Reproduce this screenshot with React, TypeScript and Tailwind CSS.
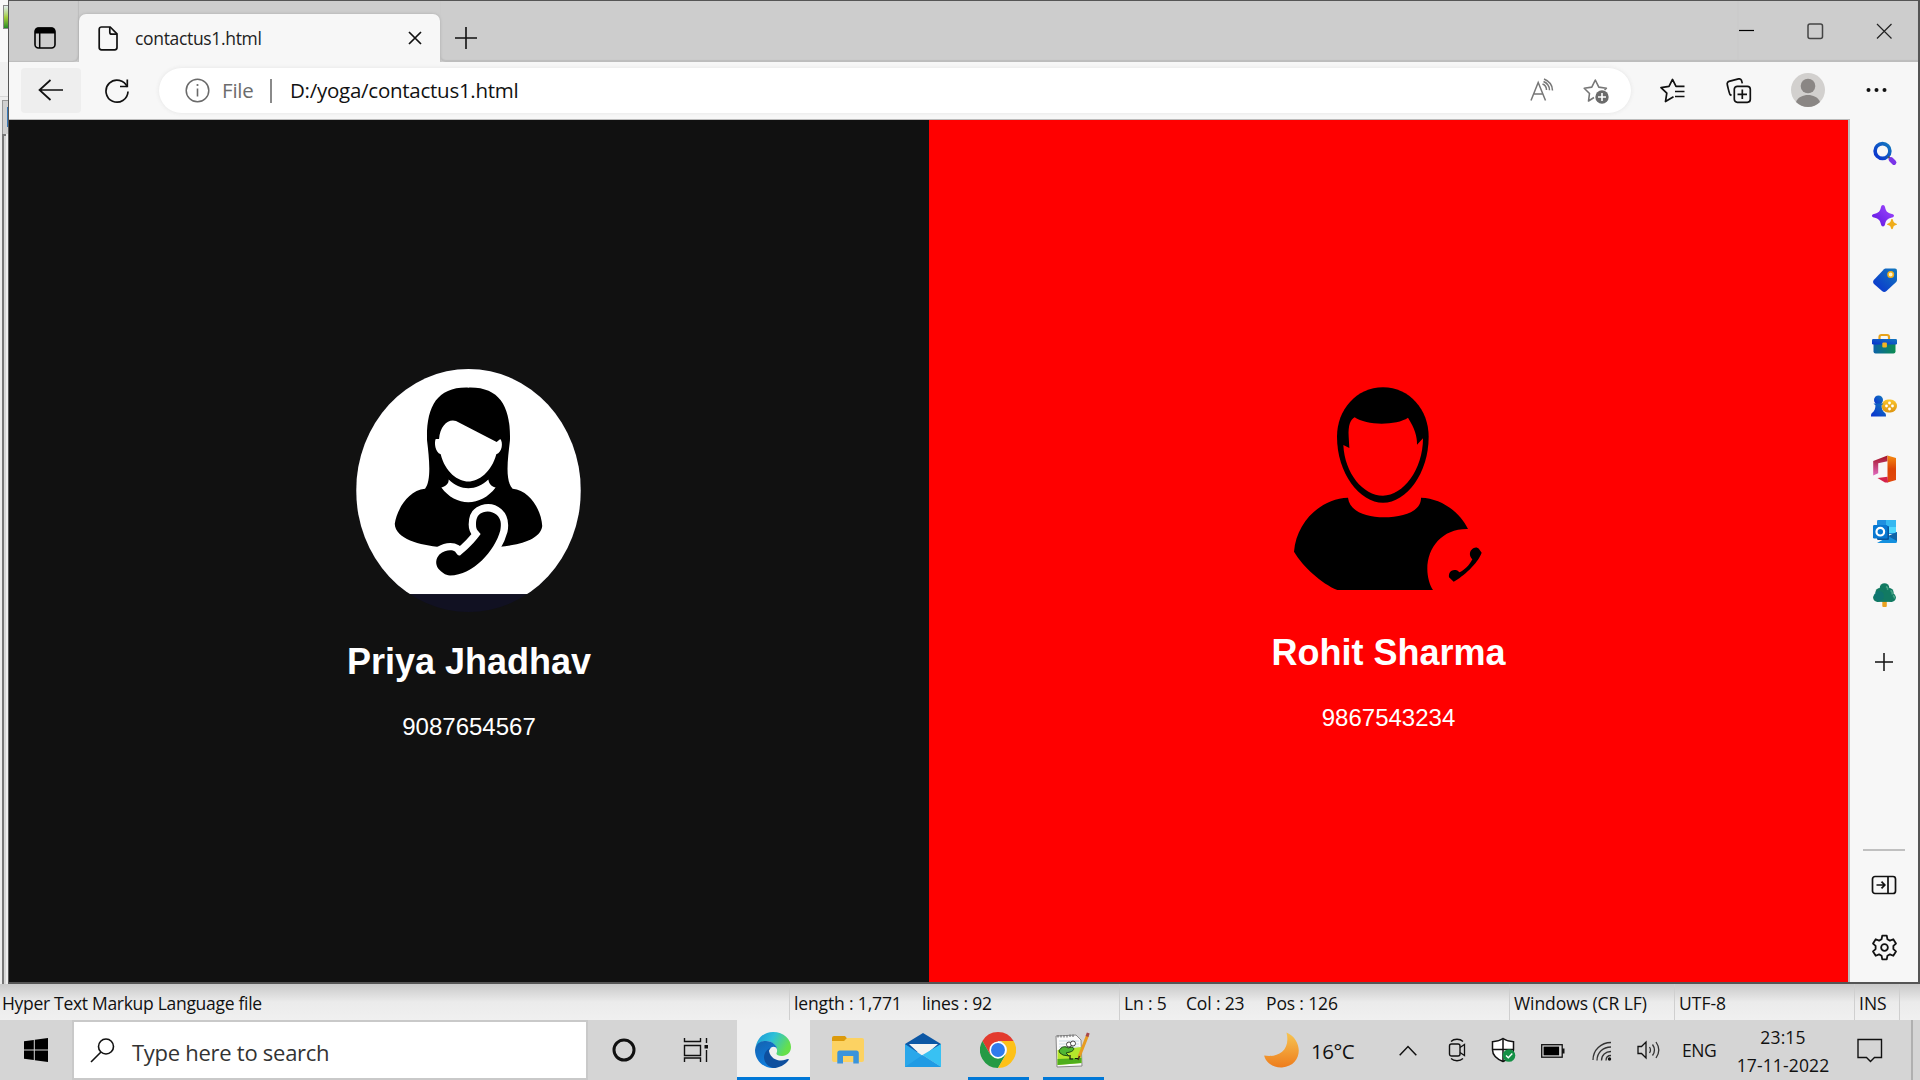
import React from "react";

type IconProps = { w: number; h: number; vb?: string; className?: string; children: React.ReactNode };

function Svg({ w, h, vb, className = "", children }: IconProps) {
  return (
    <svg
      width={w}
      height={h}
      viewBox={vb ?? `0 0 ${w} ${h}`}
      fill="none"
      stroke="none"
      className={"block shrink-0 " + className}
    >
      {children}
    </svg>
  );
}

function TabStrip() {
  return (
    <div className="flex h-[61px] items-stretch bg-[#cdcdcd]">
      <div className="flex w-[70px] shrink-0 items-center rounded-br-[6px] pl-[25px] pt-[12px] shadow-[inset_-1px_-1px_1px_#bdbdbd]">
        <Svg w={22} h={22}>
          <rect x="1" y="1" width="20" height="20" rx="3.5" stroke="#000" strokeWidth="1.6" />
          <path d="M1 6.500V4a3.500 3.500 0 0 1 3.500-3.500h13A3.500 3.500 0 0 1 21 4v2.500z" fill="#000" />
          <path d="M5.700 6v15" stroke="#000" strokeWidth="1.500" />
        </Svg>
      </div>
      <div className="mt-[13px] flex w-[361px] shrink-0 items-center rounded-t-[7px] bg-[#f7f7f7] pl-[19px] shadow-[0_0_3px_#aaaaaa]">
        <Svg w={20} h={25}>
          <path d="M3.500 1h8.700L19 7.800V21.500a2.300 2.300 0 0 1-2.300 2.300H3.500a2.300 2.300 0 0 1-2.300-2.300V3.300A2.300 2.300 0 0 1 3.500 1z" stroke="#111" strokeWidth="1.700" />
          <path d="M11.800 1v5.200a2 2 0 0 0 2 2H19" stroke="#111" strokeWidth="1.700" />
        </Svg>
        <span className="ml-[17px] w-[273px] whitespace-nowrap text-[17.5px] tracking-[-0.33px] text-[#222]">contactus1.html</span>
        <Svg w={14} h={14}>
          <path d="M1 1l12 12M13 1L1 13" stroke="#111" strokeWidth="1.700" />
        </Svg>
      </div>
      <div className="flex flex-1 items-center rounded-bl-[6px] shadow-[inset_0_-2px_1px_#bdbdbd]">
        <Svg w={22} h={22} className="ml-[15px] mt-[12px]">
          <path d="M11 0v22M0 11h22" stroke="#111" strokeWidth="1.600" />
        </Svg>
      </div>
      <div className="flex w-[180px] shrink-0 items-start shadow-[inset_0_-2px_1px_#bdbdbd]">
        <Svg w={180} h={40}>
          <path d="M1 29.500h15" stroke="#000" strokeWidth="1.200" />
          <rect x="70" y="23" width="14.500" height="14.500" rx="2" stroke="#444" strokeWidth="1.500" />
          <path d="M139 23l14.500 14.500M153.500 23L139 37.500" stroke="#222" strokeWidth="1.200" />
        </Svg>
      </div>
    </div>
  );
}

function Toolbar() {
  return (
    <div className="flex h-[57px] items-center bg-[#f7f7f7]">
      <div className="ml-[12px] flex h-[45px] w-[60px] shrink-0 items-center justify-center rounded-[4px] bg-[#eeeeee] pr-[2px]">
        <Svg w={25} h={22} className="-mt-[2px]">
          <path d="M12.500 1L1.500 11l11 10M1.500 11H25" stroke="#111" strokeWidth="1.700" />
        </Svg>
      </div>
      <Svg w={26} h={26} className="ml-[23px]">
        <path d="M23.200 9A11 11 0 1 0 24 13.500" stroke="#111" strokeWidth="1.700" />
        <path d="M23.300 1.500V8.500H16" stroke="#111" strokeWidth="1.700" />
      </Svg>
      <div className="ml-[29px] flex h-[45px] w-[1472px] shrink-0 items-center rounded-full bg-white pl-[26px] shadow-[0_0_4px_#e4e4e4]">
        <Svg w={25} h={25}>
          <circle cx="12.500" cy="12.500" r="11.300" stroke="#6a6a6a" strokeWidth="1.500" />
          <path d="M12.500 10.500v8" stroke="#6a6a6a" strokeWidth="1.600" />
          <circle cx="12.500" cy="7" r="1.100" fill="#6a6a6a" />
        </Svg>
        <span className="ml-[12px] w-[48px] text-[20.5px] tracking-[-0.2px] text-[#6c6c6c]">File</span>
        <span className="h-[24px] w-[2px] bg-[#8a8a8a]" />
        <span className="ml-[18px] w-[1240px] whitespace-nowrap text-[20.5px] tracking-[-0.26px] text-[#111]">D:/yoga/contactus1.html</span>
        <Svg w={24} h={24} className="-mt-[2px]">
          <path d="M1 22.500L8.200 4.500 15.500 22.500M3.700 16h9" stroke="#777" strokeWidth="1.500" />
          <path d="M12.500 6c2.500 1 4 3.500 4 6M13.500 3.500c3.800 1.600 6 5 6 8.700M14 1c5 2 8.500 6.500 8.500 11.500" stroke="#777" strokeWidth="1.500" />
        </Svg>
        <Svg w={27} h={27} className="ml-[29px] mt-[2px]">
          <path d="M11 19.500L5.500 23l1-7.500L1.200 10.200l7.600-1.100L12.300 2l3.500 7.100 7.600 1.100-1.800 1.800" stroke="#777" strokeWidth="1.600" strokeLinejoin="round" />
          <circle cx="19" cy="19" r="6.700" fill="#6b6b6b" />
          <path d="M19 15v8M15 19h8" stroke="#fff" strokeWidth="1.600" />
        </Svg>
      </div>
      <Svg w={26} h={26} className="ml-[29px]">
        <path d="M13.500 18.800L5.500 23.500l1.300-8.300L1 9.600l8-1.200 3.500-7 3.500 7h8.500M15 13.500h9.500M15 18.500h9.500" stroke="#111" strokeWidth="1.700" strokeLinejoin="round" />
      </Svg>
      <Svg w={26} h={26} className="ml-[40px]">
        <path d="M5.500 17.500L4 16.500C3.500 16 1 6.500 1.200 5.300c.2-1 .8-1.600 1.800-1.900l9.500-2.500c1.500-.3 2.500.3 3 1.500l.8 3" stroke="#111" strokeWidth="1.700" />
        <rect x="8.300" y="8.300" width="16" height="16" rx="3" stroke="#111" strokeWidth="1.700" />
        <path d="M16.300 11.500v9.500M11.500 16.300H21" stroke="#111" strokeWidth="1.700" />
      </Svg>
      <Svg w={34} h={34} className="-mt-[1px] ml-[39px]">
        <circle cx="17" cy="17" r="17" fill="#d2d0ce" />
        <circle cx="17" cy="13" r="7.300" fill="#8a8684" />
        <path d="M5 29c2-5 7-7 12-7s10 2 12 7a17 17 0 0 1-24 0z" fill="#8a8684" />
      </Svg>
      <Svg w={22} h={6} className="-mt-[2px] ml-[41px]">
        <circle cx="2.500" cy="3" r="2" fill="#111" />
        <circle cx="10.500" cy="3" r="2" fill="#111" />
        <circle cx="18.500" cy="3" r="2" fill="#111" />
      </Svg>
    </div>
  );
}

function WomanPortrait() {
  return (
    <Svg w={225} h={243} vb="108 55 675 730" className="mr-[2px]">
      <defs>
        <clipPath id="oval">
          <ellipse cx="445.500" cy="420" rx="337.500" ry="365" />
        </clipPath>
      </defs>
      <g clipPath="url(#oval)">
        <rect x="108" y="55" width="675" height="730" fill="#111122" />
        <rect x="108" y="55" width="675" height="676" fill="#fff" />
      </g>
      <path d="M363 590C300 585 225 565 224 520 230 480 262 420 315 415 335 390 327 320 321 270 318 170 350 108 445 111 540 108 573 170 570 270 563 330 555 390 578 415 630 420 665 480 667 527 662 570 590 585 541 589L500 590Z" fill="#000" />
      <path d="M357 265C360 225 385 203 408 211L530 274 541 265C550 275 547 305 529 311 515 365 475 393 445 393 415 393 375 365 362 311 345 305 342 275 347 265Z" fill="#fff" />
      <path d="M386 387C420 422 470 422 505 387 508 400 512 407 527 411 505 440 475 455 445 455 415 455 385 440 364 411 378 407 386 400 386 387Z" fill="#fff" />
      <path d="M490 485C505 480 520 484 530 493 543 505 545 520 541 540 525 600 460 675 390 675 375 675 365 665 355 655 345 640 347 625 358 612 375 598 395 597 405 603 412 612 413 616 420 615 440 600 465 575 482 551 475 540 468 540 468 522 468 500 475 490 490 485Z" fill="#000" stroke="#fff" strokeWidth="44" strokeLinejoin="round" paintOrder="stroke" />
    </Svg>
  );
}

function ManPortrait() {
  return (
    <Svg w={225} h={225} vb="79 45 675 675">
      <path d="M400 52C480 52 537 120 537 200 537 310 470 398 400 398 330 398 262 310 262 200 262 120 320 52 400 52Z" fill="#000" />
      <path d="M299 234L297 200C295 165 303 148 315 142 350 167 440 167 475 143 495 175 503 200 502 224L520 205C520 300 460 377 400 377 340 377 285 310 281 225Z" fill="#f00" />
      <path d="M295 383C300 425 350 442 403 442 460 442 515 425 514 383 575 385 630 425 655 477 580 475 533 530 533 597 533 620 540 645 550 660L263 660C215 640 160 590 133 545 140 455 215 385 295 383Z" fill="#000" />
      <path d="M665 540C675 530 683 532 688 537L696 548C685 580 640 620 612 635L598 622C597 612 600 600 615 600 625 600 625 604 630 607 645 600 660 585 668 568 660 560 658 548 665 540Z" fill="#000" />
    </Svg>
  );
}

function Page() {
  return (
    <div className="flex flex-1 font-['Liberation_Sans',sans-serif] text-white">
      <section className="flex w-[920px] flex-col items-center bg-[#111111] pt-[249px]">
        <WomanPortrait />
        <h2 className="mt-[29px] text-[36px] font-bold leading-[41px]">Priya Jhadhav</h2>
        <p className="mt-[31px] text-[24px] leading-[28px]">9087654567</p>
      </section>
      <section className="flex flex-1 flex-col items-center bg-[#ff0000] pt-[265px]">
        <ManPortrait />
        <h2 className="mt-[22px] text-[36px] font-bold leading-[41px]">Rohit Sharma</h2>
        <p className="mt-[31px] text-[24px] leading-[28px]">9867543234</p>
      </section>
    </div>
  );
}

function Sidebar() {
  const slot = "flex h-[63px] items-center justify-center";
  return (
    <div className="flex w-[68px] shrink-0 flex-col bg-[#f7f7f7] pt-[3px]">
      <svg width="0" height="0" className="absolute">
        <defs>
          <linearGradient id="blue" x1="0" y1="1" x2="1" y2="0"><stop offset="0" stopColor="#0a2fd0" /><stop offset="1" stopColor="#1379bd" /></linearGradient>
          <linearGradient id="violet" x1="0" y1="1" x2="1" y2="0"><stop offset="0" stopColor="#5a12e0" /><stop offset="1" stopColor="#a44bff" /></linearGradient>
          <linearGradient id="teal" x1="0" y1="0" x2="1" y2="0"><stop offset="0" stopColor="#0c62a8" /><stop offset="1" stopColor="#0c8c50" /></linearGradient>
          <linearGradient id="gold" x1="0" y1="0" x2="0" y2="1"><stop offset="0" stopColor="#fbc62c" /><stop offset="1" stopColor="#dd9410" /></linearGradient>
          <linearGradient id="red" x1="0" y1="0" x2="0" y2="1"><stop offset="0" stopColor="#a31222" /><stop offset="1" stopColor="#e06abf" /></linearGradient>
          <linearGradient id="orange" x1="0" y1="0" x2="0" y2="1"><stop offset="0" stopColor="#f58b12" /><stop offset=".5" stopColor="#dd4406" /><stop offset="1" stopColor="#e2480c" /></linearGradient>
        </defs>
      </svg>
      <div className={slot}>
        <Svg w={26} h={26} className="ml-[2px]">
          <circle cx="10.500" cy="10" r="7.400" stroke="url(#blue)" strokeWidth="3.600" />
          <path d="M16 15.500l2.500 2.500" stroke="#555" strokeWidth="2" />
          <path d="M19 18.500l3 3" stroke="#7a35e8" strokeWidth="4.800" strokeLinecap="round" />
        </Svg>
      </div>
      <div className={slot}>
        <Svg w={28} h={27} className="ml-[2px] mt-[2px]">
          <path d="M12 1c1 0 1.700.8 2 2 1 4.500 2 5.500 7 7 2.700.8 2.700 2.700 0 3.500-5 1.500-6 2.500-7 7-.6 2.600-3.400 2.600-4 0-1-4.500-2-5.500-7-7-2.700-.8-2.700-2.700 0-3.500 5-1.500 6-2.500 7-7 .3-1.200 1-2 2-2z" fill="url(#violet)" />
          <path d="M21 15c.6 0 .8.500 1 1.200.6 2 1 2.500 3 3.200 1.400.5 1.400 1.300 0 1.700-2 .7-2.400 1.100-3 3.100-.4 1.500-1.600 1.500-2 0-.6-2-1-2.400-3-3.100-1.400-.4-1.400-1.200 0-1.700 2-.7 2.400-1.200 3-3.200.2-.700.4-1.200 1-1.200z" fill="#efac1b" />
        </Svg>
      </div>
      <div className={slot}>
        <Svg w={26} h={26} className="ml-[1px]">
          <path d="M13.500 1.500h9.500A2 2 0 0 1 25 3.500v9.500c0 .8-.3 1.500-.8 2L14.500 24c-1.500 1.300-3 1.300-4.500 0L2 17c-1.200-1.200-1.200-2.800 0-4.200L12 2.200c.4-.4.900-.7 1.500-.7z" fill="url(#blue)" />
          <circle cx="18.700" cy="7.500" r="2.700" fill="#fff8d0" stroke="#f0b01c" strokeWidth="1.600" />
        </Svg>
      </div>
      <div className={slot}>
        <Svg w={27} h={22} className="mt-[2px]">
          <path d="M8.500 7V4A2 2 0 0 1 10.500 2h5.500a2 2 0 0 1 2 2v3" stroke="#e8a31a" strokeWidth="2.200" />
          <path d="M2.500 10h22v8.500a2 2 0 0 1-2 2h-18a2 2 0 0 1-2-2z" fill="url(#teal)" />
          <rect x="1" y="6" width="25" height="5.500" rx="1.200" fill="url(#blue)" />
          <rect x="11.300" y="9.500" width="4.600" height="5" rx="1" fill="#f2b422" />
        </Svg>
      </div>
      <div className={slot}>
        <Svg w={28} h={22}>
          <rect x="11.500" y="4.500" width="15.500" height="13" rx="6.500" fill="url(#gold)" />
          <circle cx="19.500" cy="8" r="1.400" fill="#fff" /><circle cx="19.500" cy="14" r="1.400" fill="#fff" />
          <circle cx="16.500" cy="11" r="1.400" fill="#fff" /><circle cx="22.500" cy="11" r="1.400" fill="#fff" />
          <circle cx="8.500" cy="5" r="4.500" fill="url(#blue)" />
          <path d="M3.500 8.500h10l-2 2c.2 3 1 5.500 3.500 7.500.8.700 1 1.500 1 3.500H1c0-2 .2-2.800 1-3.500 2.500-2 3.300-4.500 3.500-7.500z" fill="url(#blue)" />
        </Svg>
      </div>
      <div className={slot}>
        <Svg w={25} h={28} className="ml-[1px]">
          <path d="M15.500.5L1.200 6v14.500l5-2.200V8.300l9.300-2z" fill="url(#red)" />
          <path d="M15.500.5L24 3v22l-8.500 2.500V6z" fill="url(#orange)" />
          <path d="M5.500 23L15.500 21.800 16 27.500 13 27.500z" fill="#d5224a" />
        </Svg>
      </div>
      <div className={slot}>
        <Svg w={26} h={25} className="ml-[1px]">
          <rect x="5" y="1" width="19" height="14" rx="1.200" fill="#1f8fdf" />
          <path d="M14 1h10v7H14z" fill="#35b8f1" /><path d="M14 8h10v6H14z" fill="#50d9ff" />
          <path d="M5 24h18.500A1.500 1.500 0 0 0 25 22.500V13L5 24z" fill="#1490df" />
          <path d="M25 13v9l-9-5z" fill="#1064a8" />
          <rect x="5" y="7" width="12" height="14" rx="1.200" fill="#0a559a" />
          <rect x="1" y="6" width="14.500" height="13.500" rx="1.200" fill="#0878d2" />
          <circle cx="8.300" cy="12.700" r="3.800" stroke="#fff" strokeWidth="2.200" />
        </Svg>
      </div>
      <div className={slot}>
        <Svg w={26} h={26} className="ml-[1px]">
          <rect x="10.300" y="17" width="4.500" height="8" rx="1" fill="#eaa220" />
          <g fill="#127a62"><circle cx="12.500" cy="6" r="4.800" /><circle cx="8" cy="10.500" r="4.600" /><circle cx="17" cy="10.500" r="4.600" /><circle cx="5.500" cy="15.500" r="4.400" /><circle cx="19.500" cy="15.500" r="4.400" /><rect x="5" y="10" width="15" height="9.900" /></g>
          <path d="M14 4.500a3 3 0 0 1 1.500 3.500M18.500 8.500a3 3 0 0 1 1.500 4M21 13.500a3 3 0 0 1 1.500 3" stroke="#48a486" strokeWidth="1.500" />
          <circle cx="7" cy="14" r="5" fill="#0e6e80" opacity=".45" />
        </Svg>
      </div>
      <div className="mt-[4px] flex h-[63px] items-center justify-center pr-[1px]">
        <Svg w={18} h={18}><path d="M9 0v18M0 9h18" stroke="#111" strokeWidth="1.500" /></Svg>
      </div>
      <div className="mx-auto mt-[156px] h-[2px] w-[42px] bg-[#c0c0c0]" />
      <div className="mt-[2px] flex h-[63px] items-center justify-center">
        <Svg w={26} h={20}>
          <rect x="1.500" y="1.500" width="23" height="17" rx="2.500" stroke="#111" strokeWidth="1.700" />
          <path d="M17 1.500v17M5.500 10h8M10.500 6.700l3.300 3.300-3.300 3.300" stroke="#111" strokeWidth="1.700" />
        </Svg>
      </div>
      <div className={slot}>
        <Svg w={27} h={27} vb="0 0 24 24">
          <path d="M10 1.500h4l.6 3.200 2.200 1.200 3-1.200 2.400 3.800-2.300 2.100v2.800l2.300 2.100-2.400 3.800-3-1.200-2.200 1.200-.6 3.200h-4l-.6-3.200-2.200-1.200-3 1.200-2.400-3.800L4.100 13.400v-2.800L1.800 8.500l2.400-3.800 3 1.200 2.200-1.200z" stroke="#111" strokeWidth="1.600" strokeLinejoin="round" />
          <circle cx="12" cy="12" r="3" stroke="#111" strokeWidth="1.600" />
        </Svg>
      </div>
    </div>
  );
}

function StatusBar() {
  const cell = "flex shrink-0 items-center whitespace-nowrap border-l border-[#cfcfcf] pl-[4px]";
  return (
    <div className="flex h-[36px] bg-gradient-to-b from-[#c9c9c9] via-[#ebebeb] to-[#f0f0f0] text-[17.5px] text-[#111]">
      <div className="flex w-[789px] shrink-0 items-center pl-[2px] pt-[3px] tracking-[-0.3px]">Hyper Text Markup Language file</div>
      <div className={cell + " w-[330px] pt-[3px] tracking-[-0.15px]"}>
        <span className="w-[128px]">length : 1,771</span><span>lines : 92</span>
      </div>
      <div className={cell + " w-[390px] pt-[3px] tracking-[-0.15px]"}>
        <span className="w-[62px]">Ln : 5</span><span className="w-[80px]">Col : 23</span><span>Pos : 126</span>
      </div>
      <div className={cell + " w-[165px] pt-[3px] tracking-[-0.07px]"}>Windows (CR LF)</div>
      <div className={cell + " w-[180px] pt-[3px]"}>UTF-8</div>
      <div className={cell + " w-[45px] pt-[3px]"}>INS</div>
      <div className="w-[21px] border-l border-[#cfcfcf]" />
    </div>
  );
}

function Taskbar() {
  return (
    <div className="flex h-[60px] items-center bg-[#d5d5d5] text-[#111]">
      <div className="flex w-[72px] shrink-0 justify-center">
        <Svg w={24} h={24}>
          <path d="M0 3.300l9.800-1.400v9.500H0zM10.800 1.700L24 0v11.400H10.800zM0 12.500h9.800V22L0 20.700zM10.800 12.500H24V24l-13.200-1.800z" fill="#000" />
        </Svg>
      </div>
      <div className="flex h-[60px] w-[516px] shrink-0 items-center border-2 border-[#c9c9c9] bg-white pl-[16px]">
        <Svg w={25} h={25}>
          <circle cx="16" cy="8.500" r="7.500" stroke="#111" strokeWidth="1.600" />
          <path d="M11 14L1 24" stroke="#111" strokeWidth="1.600" />
        </Svg>
        <span className="ml-[17px] mt-[4px] whitespace-nowrap text-[22px] leading-[30px] tracking-[-0.27px] text-[#333]">Type here to search</span>
      </div>
      <Svg w={24} h={24} className="ml-[24px]">
        <circle cx="12" cy="12" r="10" stroke="#111" strokeWidth="3" />
      </Svg>
      <Svg w={26} h={24} className="ml-[47px]">
        <path d="M1.500 0v3.500h16V0M1.500 7.500h16v10h-16zM1.500 24v-4h16v4M23.500 0v5M23.500 12v12" stroke="#111" strokeWidth="1.400" />
        <rect x="21.500" y="7" width="3.500" height="3.500" fill="#111" />
      </Svg>
      <div className="ml-[28px] flex h-full w-[73px] shrink-0 items-center justify-center border-b-[3px] border-[#0078d7] bg-[#f0f0f0] pr-[2px]">
        <Svg w={36} h={36} vb="0 0 36 36" className="mt-[3px]">
          <defs>
            <linearGradient id="e1" x1="0" y1="0" x2="1" y2=".4"><stop offset="0" stopColor="#1a94d8" /><stop offset=".5" stopColor="#2dc0d8" /><stop offset="1" stopColor="#66e04a" /></linearGradient>
            <linearGradient id="e2" x1="0" y1="0" x2=".5" y2="1"><stop offset="0" stopColor="#1462b0" /><stop offset="1" stopColor="#0f7fe0" /></linearGradient>
          </defs>
          <path d="M.5 16C2 6 9 0 18 0c11 0 18 7.500 18 15 0 5.500-4 9-9 9-4 0-6-1.500-5.500-2.800C23 19 22 13 16 10 9 7 2 11 .5 16z" fill="url(#e1)" />
          <path d="M0 18C1 11 6 9 11 9c7 0 11 5 11 8-1.500-3.500-7-3-8 2-1 6 4 13 13 12-3 3-6 5-9.500 5C8 36 0 28 0 18z" fill="url(#e2)" />
          <path d="M14 19c1.500 7 7 9.500 12 9.500 3.500 0 5.500-1.500 7-1.500.8 0 1 .5.500 1.200C30 33 24 36 18 36c-7-2-11-9-8-15 1-2 3-4.500 6-5-1.500 1-2.300 2-2 3z" fill="#0e4f9e" />
        </Svg>
      </div>
      <Svg w={32} h={28} className="ml-[22px]">
        <path d="M0 2a2 2 0 0 1 2-2h11l2.500 3-3 3H0z" fill="#dc9a0c" />
        <path d="M0 5h12l3-3h15a2 2 0 0 1 2 2v20a2 2 0 0 1-2 2H2a2 2 0 0 1-2-2z" fill="#fcd262" />
        <path d="M5.300 27.500V17a2.500 2.500 0 0 1 2.500-2.500h16.500A2.500 2.500 0 0 1 26.800 17v10.500h-5.500V20H11v7.500z" fill="#3a94db" />
      </Svg>
      <Svg w={36} h={34} className="ml-[41px]">
        <path d="M0 11L18 0l18 11v8H0z" fill="#0c57a5" />
        <path d="M4 11h29L18 24z" fill="#f3f3f3" />
        <path d="M0 11l18 12 18 11H0z" fill="#2aa7ea" />
        <path d="M36 11v23L17.500 22z" fill="#38c1f3" />
        <path d="M17.500 22L36 34H0z" fill="#209be4" />
      </Svg>
      <div className="ml-[27px] flex h-full w-[61px] shrink-0 items-center justify-center border-b-[3px] border-[#0078d7] pr-[2px]">
        <Svg w={36} h={36} vb="0 0 48 48" className="mt-[3px]">
          <path d="M24 0A24 24 0 0 0 3.200 12L13.600 30 24 24V12h20.800A24 24 0 0 0 24 0z" fill="#e33b2e" />
          <path d="M3.200 12A24 24 0 0 0 24 48l10.400-18L24 34 13.600 30z" fill="#259a45" />
          <path d="M44.800 12A24 24 0 0 1 24 48l10.400-18a12 12 0 0 0 0-12L28 12z" fill="#fdc118" />
          <circle cx="24" cy="24" r="11.500" fill="#fff" />
          <circle cx="24" cy="24" r="9.300" fill="#2f7bed" />
        </Svg>
      </div>
      <div className="ml-[14px] flex h-full w-[61px] shrink-0 items-center justify-center border-b-[3px] border-[#0078d7] pr-[1px]">
        <Svg w={36} h={36} className="mt-[2px]">
          <path d="M1 4l20-1 5 5 1 26-25 1z" fill="#fafafa" stroke="#888" strokeWidth="1" />
          <path d="M4 9h20M4 12h20M4 15h20" stroke="#c9dce8" strokeWidth="1" />
          <path d="M2.500 18l23.500-3 .5 16-24 2z" fill="#b4e62c" />
          <path d="M2.500 27l24-1v5l-24 2z" fill="#4fae1c" />
          <path d="M3 3v2.500M6 3v2.500M9 3v2.500M12 3v2.500M15 2.500V5M18 2.500V5" stroke="#777" strokeWidth="1.200" />
          <path d="M4 19c2-5 7-5 9-3l4-1c3 1 2 4-2 5l-4 1 3 3-6-1-3-2z" fill="#4fb634" stroke="#1d4a12" strokeWidth="1" />
          <circle cx="14" cy="12.500" r="2.500" fill="#fff" stroke="#222" strokeWidth=".8" /><circle cx="18" cy="11.500" r="2.500" fill="#fff" stroke="#222" strokeWidth=".8" />
          <path d="M15 23v4h3M20 26.500h4" stroke="#111" strokeWidth="1.200" />
          <path d="M32.500 3.500L24 25" stroke="#e79c20" strokeWidth="3" />
          <path d="M33.300 1L32 4.500" stroke="#a8474a" strokeWidth="3" />
          <path d="M24.500 24l-1.500 4" stroke="#4a3410" strokeWidth="1.600" />
        </Svg>
      </div>
      <Svg w={36} h={36} className="ml-[160px]">
        <defs><linearGradient id="moon" x1="0" y1="0" x2="0" y2="1"><stop offset="0" stopColor="#f6c552" /><stop offset="1" stopColor="#ee7c1c" /></linearGradient></defs>
        <path d="M22.500.5C40 8 39 34 18 35.500 8 36 1 29 .2 23.500 13 26 27 19 22.500.5z" fill="url(#moon)" />
      </Svg>
      <span className="ml-[11px] mt-[2px] w-[88px] text-[20.5px] tracking-[-0.45px]">16°C</span>
      <Svg w={18} h={11}><path d="M.7 10.300L9 1.500l8.300 8.800" stroke="#111" strokeWidth="1.500" /></Svg>
      <Svg w={18} h={24} className="ml-[31px]">
        <path d="M3 3.500c3-3 9-3 12 0M3 20.500c3 3 9 3 12 0M12 9.500l4.500-3v11l-4.500-3" stroke="#111" strokeWidth="1.300" />
        <rect x="1.500" y="6" width="10.500" height="12" rx="2" stroke="#111" strokeWidth="1.400" />
      </Svg>
      <Svg w={26} h={26} className="ml-[25px]">
        <path d="M12 1.500c3 2 6 3.200 10.500 3.200v8C22.500 18 18 22 12 24.500 6 22 1.500 18 1.500 12.700v-8C6 4.700 9 3.500 12 1.500z" fill="#fff" stroke="#111" strokeWidth="1.500" />
        <path d="M12 2v22M2 12.500h20" stroke="#111" strokeWidth="1.500" />
        <circle cx="18" cy="18.500" r="6.300" fill="#149045" />
        <path d="M15 18.500l2.300 2.300 4-4.300" stroke="#fff" strokeWidth="1.400" />
      </Svg>
      <Svg w={24} h={14} className="ml-[24px] mt-[1px]">
        <rect x=".7" y=".7" width="20.500" height="12.500" stroke="#111" strokeWidth="1.300" />
        <rect x="2.600" y="2.600" width="15.500" height="8.700" fill="#000" /><rect x="21" y="4.500" width="2.500" height="5" fill="#111" />
      </Svg>
      <Svg w={20} h={20} className="ml-[27px] mt-[1px]">
        <path d="M1 19C1 9 9 1.500 19 1.500M5 19.500C5 11.500 11 6 19 6M9.500 19.500c0-5.500 4-9 9.500-9M14 19.500c0-3 2-5 5-5" stroke="#333" strokeWidth="1.300" />
        <circle cx="17.500" cy="18" r="1.700" fill="#111" />
      </Svg>
      <Svg w={24} h={20} className="ml-[25px]">
        <path d="M1 6.500h3.500L9 2v16l-4.500-4.500H1z" stroke="#111" strokeWidth="1.300" />
        <path d="M12.500 7c1.300 2 1.300 4 0 6M15.500 4.500c2.500 3.500 2.500 7.500 0 11M19 2c3.500 5 3.500 11 0 16" stroke="#333" strokeWidth="1.300" />
      </Svg>
      <span className="ml-[21px] mt-[1px] w-[43px] text-[17.5px] tracking-[-0.4px]">ENG</span>
      <div className="flex w-[116px] shrink-0 flex-col items-center pt-[1px] text-[17.5px] leading-[28px] tracking-[0.13px]">
        <span>23:15</span>
        <span className="whitespace-nowrap">17-11-2022</span>
      </div>
      <Svg w={26} h={25} className="ml-[16px]">
        <path d="M1 1.500h23.500v18h-7l-4 4-4-4H1z" stroke="#111" strokeWidth="1.400" />
      </Svg>
      <div className="ml-auto mr-[7px] h-full w-[2px] bg-[#b0b0b0]" />
    </div>
  );
}

function EdgeStrip() {
  return (
    <div className="flex w-[8px] shrink-0 flex-col bg-[#ededed]">
      <div className="h-[62px] bg-[#f8f8f8] pl-[3px] pt-[5px]">
        <div className="h-[24px] border border-r-0 border-[#888] bg-gradient-to-b from-[#dfe9ea] via-[#a5cf3c] to-[#1f8d24]" />
      </div>
      <div className="h-[35px] border-b border-[#d6d6d6] bg-[#f0f0f0]" />
      <div className="ml-[2px] mt-[3px] h-[34px] border-l border-t border-[#999] bg-[#d0d0d0] pl-[4px] pt-[6px]">
        <div className="h-[20px] bg-[#3778b8]" />
      </div>
      <div className="ml-[2px] mr-[2px] flex-1 border-l-2 border-t-2 border-[#777] bg-[#d8d8d8]" />
    </div>
  );
}

export default function App() {
  return (
    <div className="flex h-[1080px] w-[1920px] flex-col overflow-hidden bg-[#d5d5d5] font-['Open_Sans','Noto_Sans',sans-serif]">
      <div className="flex h-[984px] shrink-0">
        <EdgeStrip />
        <div className="flex flex-1 flex-col border-b-2 border-l border-r-2 border-t border-[#555555]">
          <TabStrip />
          <Toolbar />
          <div className="flex flex-1">
            <div className="flex w-[1841px] shrink-0 flex-col border-r-2 border-t border-[#bbbbbb]">
              <Page />
            </div>
            <Sidebar />
          </div>
        </div>
      </div>
      <StatusBar />
      <Taskbar />
    </div>
  );
}
